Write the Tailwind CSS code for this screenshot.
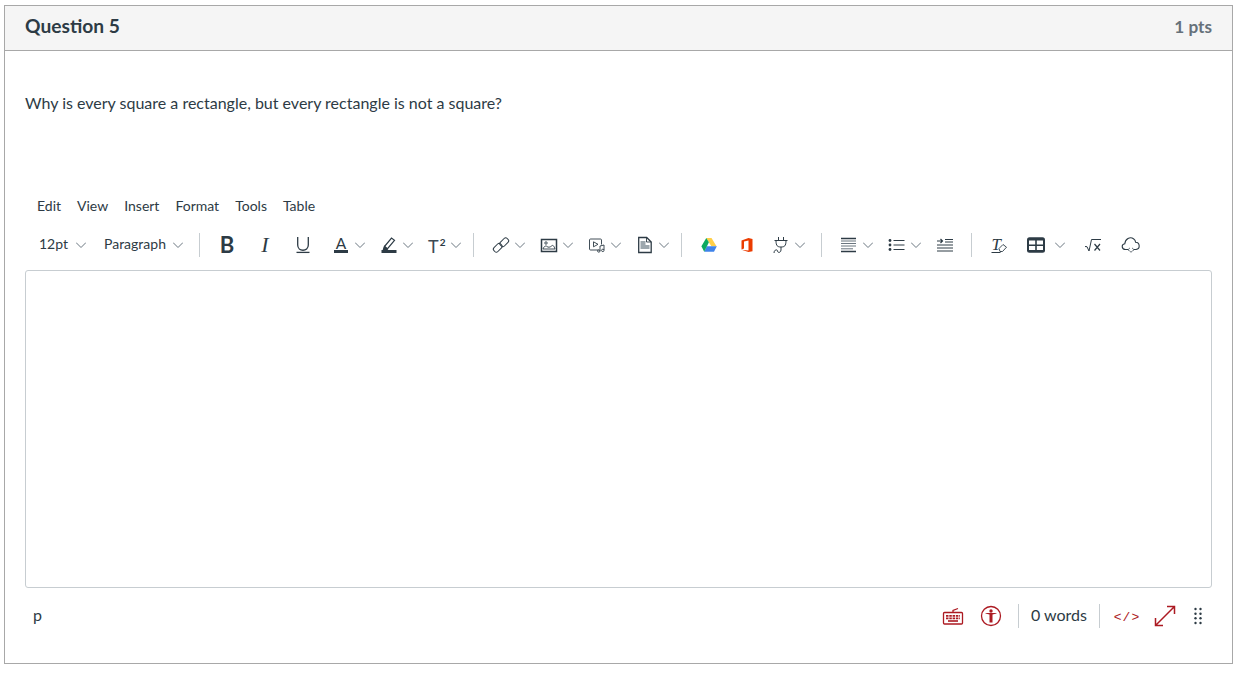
<!DOCTYPE html>
<html lang="en">
<head>
<meta charset="utf-8">
<script src="https://cdn.jsdelivr.net/npm/@tailwindcss/browser@4"></script>
<title>Question 5</title>
</head>
<body class="bg-white font-['Lato','Noto_Sans',sans-serif] text-[#2d3b45] overflow-hidden">
<div class="pt-[5px] pl-[4px] h-[673px]">
<section class="w-[1229px] h-[659px] border border-[#a8a8a8] flex flex-col">
  <header class="h-[45px] shrink-0 bg-[#f5f5f5] border-b border-[#a8a8a8] flex items-center justify-between pl-[20px] pr-[20px]">
    <h2 class="text-[19.200px] font-bold leading-[24px] mt-[-5px] [font-variant-ligatures:common-ligatures] [text-rendering:optimizeLegibility]">Question 5</h2>
    <span class="text-[17.200px] font-bold text-[#66717a] leading-[24px] mt-[-2px]">1 pts</span>
  </header>
  <div class="px-[20px] flex flex-col">
    <p class="mt-[40px] text-[16px] leading-[24px] h-[24px]">Why is every square a rectangle, but every rectangle is not a square?</p>

    <nav class="mt-[78px] h-[24px] flex items-center text-[14px] pl-[12px] gap-[16px]">
      <span>Edit</span><span>View</span><span>Insert</span><span>Format</span><span>Tools</span><span>Table</span>
    </nav>

    <div class="mt-[8px] h-[40px] flex items-center">
      <div class="w-[62px] pl-[14px] flex items-center text-[14px]"><span class="w-[37px] mt-[-3px]">12pt</span><svg width="10" height="6" viewBox="0 0 10 6" fill="none" stroke="#6b7780"><path d="M0 .5l5 5 5-5"/></svg></div>
      <div class="w-[105px] pl-[17px] flex items-center text-[14px]"><span class="w-[69px] mt-[-3px]">Paragraph</span><svg width="10" height="6" viewBox="0 0 10 6" fill="none" stroke="#6b7780"><path d="M0 .5l5 5 5-5"/></svg></div>
      <i class="block w-px h-[24px] bg-[#c7cdd1] ml-[7px] mr-[8px]"></i>

      <div class="w-[38px] h-[24px] flex items-center justify-center"><span class="text-[22px] font-bold leading-[24px] mt-[-1px]">B</span></div>
      <div class="w-[38px] h-[24px] flex items-center justify-center"><span class="font-['Liberation_Serif',serif] italic text-[22px] leading-[24px]">I</span></div>
      <div class="w-[38px] flex justify-center"><svg width="20" height="20" viewBox="0 0 20 20" fill="none" stroke="#2d3b45" stroke-width="1.300"><path d="M4.700 2v8c0 7 10.600 7 10.600 0V2"/><path d="M3.500 17.400h13"/></svg></div>

      <div class="w-[48px] flex items-center pl-[9px]"><svg width="20" height="20" viewBox="0 0 20 20"><text x="10" y="13.500" text-anchor="middle" font-size="15.500" fill="#2d3b45" font-family="Lato">A</text><rect x="3" y="15" width="14" height="3" fill="#2d3b45"/></svg><svg class="ml-[4px]" width="10" height="6" viewBox="0 0 10 6" fill="none" stroke="#6b7780"><path d="M0 .5l5 5 5-5"/></svg></div>
      <div class="w-[48px] flex items-center pl-[9px]"><svg width="20" height="20" viewBox="0 0 20 20" fill="none" stroke="#2d3b45" stroke-width="1.200"><path d="M5.500 11.500l7-8.500 3 2.400-7 8.300-3.500 1z"/><path d="M5.500 11.500l3 2.200"/><path d="M5.500 11.500l-1 2.800h3.500z" fill="#2d3b45"/><rect x="2.500" y="15" width="15" height="3" fill="#2d3b45" stroke="none"/></svg><svg class="ml-[4px]" width="10" height="6" viewBox="0 0 10 6" fill="none" stroke="#6b7780"><path d="M0 .5l5 5 5-5"/></svg></div>
      <div class="w-[48px] flex items-center pl-[9px]"><div class="w-[20px] h-[24px] flex items-start pl-[1px]"><span class="text-[18px] leading-[20px] mt-[3px] font-normal text-[#3d4a54]">T</span><span class="text-[10px] font-bold leading-[10px] mt-[4px] ml-[1px]">2</span></div><svg class="ml-[4px]" width="10" height="6" viewBox="0 0 10 6" fill="none" stroke="#6b7780"><path d="M0 .5l5 5 5-5"/></svg></div>
      <i class="block w-px h-[24px] bg-[#c7cdd1] ml-[7px] mr-[8px]"></i>

      <div class="w-[48px] flex items-center pl-[9px]"><svg width="20" height="20" viewBox="0 0 20 20" fill="none" stroke="#2d3b45" stroke-width="1"><rect x="8.500" y="4.500" width="9.500" height="5.500" rx="2.200" transform="rotate(-45 13.250 7.250)"/><rect x="2" y="10" width="9.500" height="5.500" rx="2.200" transform="rotate(-45 6.750 12.750)"/></svg><svg class="ml-[4px]" width="10" height="6" viewBox="0 0 10 6" fill="none" stroke="#6b7780"><path d="M0 .5l5 5 5-5"/></svg></div>
      <div class="w-[48px] flex items-center pl-[9px]"><svg width="20" height="20" viewBox="0 0 20 20" fill="none" stroke="#2d3b45"><rect x="2.500" y="4.500" width="15" height="12" stroke-width="1.500"/><path d="M4 14c1-3 3-3.500 4-2.500s3 1 4.500-.5 2.500 0 3.500 3z" stroke-width=".9"/><circle cx="7" cy="8" r="1.200" stroke-width=".9"/></svg><svg class="ml-[4px]" width="10" height="6" viewBox="0 0 10 6" fill="none" stroke="#6b7780"><path d="M0 .5l5 5 5-5"/></svg></div>
      <div class="w-[48px] flex items-center pl-[9px]"><svg width="20" height="20" viewBox="0 0 20 20" fill="none" stroke="#2d3b45" stroke-width=".9"><path d="M11.500 15H3.500c-.6 0-1-.4-1-1V5c0-.6.4-1 1-1h10c.6 0 1 .4 1 1v4.500"/><path d="M6.500 6.800v5l4.500-2.500z"/><path d="M13 16V11l4-1v5"/><circle cx="11.800" cy="16" r="1.200"/><circle cx="15.800" cy="15.400" r="1.200"/></svg><svg class="ml-[4px]" width="10" height="6" viewBox="0 0 10 6" fill="none" stroke="#6b7780"><path d="M0 .5l5 5 5-5"/></svg></div>
      <div class="w-[48px] flex items-center pl-[9px]"><svg width="20" height="20" viewBox="0 0 20 20" fill="none" stroke="#2d3b45"><path d="M3.700 2.500h8l4.500 4.500v10.500H3.700z" stroke-width="1.300"/><path d="M11.500 2.500V7h4.700" stroke-width=".9"/><path d="M5.500 7h5M5.500 9h5M5.500 11h9M5.500 13h9" stroke="#7d8a93" stroke-width="1.300"/></svg><svg class="ml-[4px]" width="10" height="6" viewBox="0 0 10 6" fill="none" stroke="#6b7780"><path d="M0 .5l5 5 5-5"/></svg></div>
      <i class="block w-px h-[24px] bg-[#c7cdd1] ml-[7px] mr-[8px]"></i>

      <div class="w-[38px] flex justify-center"><svg width="20" height="20" viewBox="0 0 20 20"><path d="M7.300 3h5.200l5 8.300h-5.200z" fill="#ffcf48"/><path d="M5.200 16.800h9.800l2.800-5.500H7.800z" fill="#3f83ea"/><path d="M7.300 3l2.600 4.300-4.700 9.500-2.800-5.500z" fill="#0da960"/></svg></div>
      <div class="w-[34px] flex justify-center pl-[4px]"><svg width="20" height="20" viewBox="0 0 20 20"><path d="M4.500 5.500L11.500 3l4 .9v12.300l-4 .9-7-2.400 7 .9V5.500L7 6.600v6.800l-2.500 1.200z" fill="#eb3c00"/></svg></div>
      <div class="w-[48px] flex items-center pl-[9px]"><svg width="20" height="20" viewBox="0 0 20 20" fill="none" stroke="#2d3b45" stroke-width="1"><path d="M7.500 2v3.500M12.500 2v3.500M3.500 5.500h13M5 5.500c0 5.500 1.500 6.500 5 6.500s5-1 5-6.500"/><path d="M10 12v3c0 3-3.500 3-3.500 1s-3.500-1.500-3.500 2"/></svg><svg class="ml-[4px]" width="10" height="6" viewBox="0 0 10 6" fill="none" stroke="#6b7780"><path d="M0 .5l5 5 5-5"/></svg></div>
      <i class="block w-px h-[24px] bg-[#c7cdd1] ml-[11px] mr-[8px]"></i>

      <div class="w-[48px] flex items-center pl-[9px]"><svg width="20" height="20" viewBox="0 0 20 20" stroke="#2d3b45"><path d="M2 3.500h15M2 16.500h15" stroke-width="1.300"/><path d="M2 6h15M2 8.500h15M2 11h15M2 13.800h12" stroke-width=".9" stroke="#5a6670"/></svg><svg class="ml-[4px]" width="10" height="6" viewBox="0 0 10 6" fill="none" stroke="#6b7780"><path d="M0 .5l5 5 5-5"/></svg></div>
      <div class="w-[48px] flex items-center pl-[9px]"><svg width="20" height="20" viewBox="0 0 20 20" stroke="#2d3b45"><circle cx="3" cy="5.500" r="1.400" fill="#2d3b45" stroke="none"/><circle cx="3" cy="10" r="1.400" fill="#2d3b45" stroke="none"/><circle cx="3" cy="14.500" r="1.400" fill="#2d3b45" stroke="none"/><path d="M6.500 5.500h11M6.500 10h11M6.500 14.500h11" stroke-width="1.100"/></svg><svg class="ml-[4px]" width="10" height="6" viewBox="0 0 10 6" fill="none" stroke="#6b7780"><path d="M0 .5l5 5 5-5"/></svg></div>
      <div class="w-[38px] flex justify-center"><svg width="20" height="20" viewBox="0 0 20 20" fill="none" stroke="#2d3b45" stroke-width="1"><path d="M2 10h16M2 13h16M2 16h16M10 7h8M10 4.500h8"/><path d="M2 6h5M5.500 4l2 2-2 2" stroke-width="1.200"/></svg></div>
      <i class="block w-px h-[24px] bg-[#c7cdd1] ml-[7px] mr-[8px]"></i>

      <div class="w-[38px] flex justify-center"><svg width="20" height="20" viewBox="0 0 20 20" fill="none" stroke="#2d3b45"><text x="2.500" y="15" font-size="17" font-style="italic" fill="#2d3b45" stroke="none" font-family="Liberation Serif">T</text><path d="M2.500 17.500h9" stroke-width="1"/><path d="M10 13.500l4-4 3.500 2.700-4 4.300h-2.500z" stroke-width=".9"/></svg></div>
      <div class="w-[56px] flex items-center pl-[9px]"><svg width="18" height="16" viewBox="0 0 18 16"><rect width="18" height="15.500" rx="2.500" y=".2" fill="#2d3b45"/><rect x="2" y="3.500" width="6.200" height="4" fill="#fff"/><rect x="9.800" y="3.500" width="6.200" height="4" fill="#fff"/><rect x="2" y="9" width="6.200" height="4" fill="#fff"/><rect x="9.800" y="9" width="6.200" height="4" fill="#fff"/></svg><svg class="ml-[10px]" width="10" height="6" viewBox="0 0 10 6" fill="none" stroke="#6b7780"><path d="M0 .5l5 5 5-5"/></svg></div>
      <div class="w-[38px] flex justify-center"><svg width="20" height="20" viewBox="0 0 20 20" fill="none" stroke="#2d3b45"><path d="M2 11.500l2 .2 2 4.300L8.500 4.500H18" stroke-width="1"/><path d="M11.500 9l5.500 6.500M17 9l-5.500 6.500" stroke-width="1.200"/></svg></div>
      <div class="w-[38px] flex justify-center"><svg width="20" height="20" viewBox="0 0 20 20" fill="none" stroke="#2d3b45" stroke-width="1.100"><path d="M7 14.500H4.500C.5 14.500 0 9.500 3.800 8.800 4.200 4.200 9 1 12.500 3.800c1.300.9 2 2.200 2.100 3.500 4.400.2 5 6.700.4 7.200H13"/><path d="M8.800 13l-1.700 1.700 1.700 1.700M11.200 13l1.700 1.700-1.700 1.700M10 16v1.500" stroke-width=".9"/></svg></div>
    </div>

    <div class="mt-[5px] h-[318px] border border-[#c7cdd1] rounded-[3px] bg-white"></div>

    <div class="mt-[8px] h-[40px] flex items-center text-[#2d3b45]">
      <span class="pl-[8px] text-[16px] mt-[-2px]">p</span>
      <div class="ml-auto flex items-center">
        <div class="w-[38px] flex justify-center"><svg width="22" height="20" viewBox="0 0 22 20" fill="none" stroke="#ac1a22" stroke-width="1.300"><rect x="1.500" y="6.500" width="19" height="11.500" rx="1"/><path d="M11 6.500V4.500l5-2"/><path d="M4 9.800h14M4 12.300h14" stroke-width="1.700" stroke-dasharray="2.500 .8"/><path d="M6 15h10" stroke-width="1.600"/></svg></div>
        <div class="w-[38px] flex justify-center"><svg width="22" height="22" viewBox="0 0 22 22" fill="none" stroke="#ac1a22" stroke-width="1.300"><circle cx="11" cy="11" r="9.500"/><circle cx="11" cy="6" r="1.700" fill="#ac1a22" stroke="none"/><path d="M5.500 8.500l4 1v8h3v-8l4-1v-.5h-11z" fill="#ac1a22" stroke="none"/></svg></div>
        <i class="block w-px h-[24px] bg-[#c7cdd1] ml-[8px]"></i>
        <span class="ml-[12px] mr-[12px] text-[16px] w-[56px] whitespace-nowrap mt-[-2px]">0 words</span>
        <i class="block w-px h-[24px] bg-[#c7cdd1]"></i>
        <div class="w-[38px] ml-[8px] flex justify-center"><span class="font-['Liberation_Mono',monospace] text-[13px] text-[#ac1a22] whitespace-nowrap tracking-[1px] mt-[3px]">&lt;/&gt;</span></div>
        <div class="w-[38px] flex justify-center"><svg width="22" height="22" viewBox="0 0 22 22" fill="none" stroke="#ac1a22" stroke-width="1.500"><path d="M1.500 20.500l19-19M13 1.500h7.500V9M1.500 13v7.500H9"/></svg></div>
        <div class="w-[14px] ml-[7px] mr-[7px] flex justify-center"><svg width="10" height="18" viewBox="0 0 10 18" fill="#2d3b45"><circle cx="2.500" cy="2" r="1.200"/><circle cx="7.500" cy="2" r="1.200"/><circle cx="2.500" cy="6.700" r="1.200"/><circle cx="7.500" cy="6.700" r="1.200"/><circle cx="2.500" cy="11.300" r="1.200"/><circle cx="7.500" cy="11.300" r="1.200"/><circle cx="2.500" cy="16" r="1.200"/><circle cx="7.500" cy="16" r="1.200"/></svg></div>
      </div>
    </div>
  </div>
</section>
</div>
</body>
</html>
